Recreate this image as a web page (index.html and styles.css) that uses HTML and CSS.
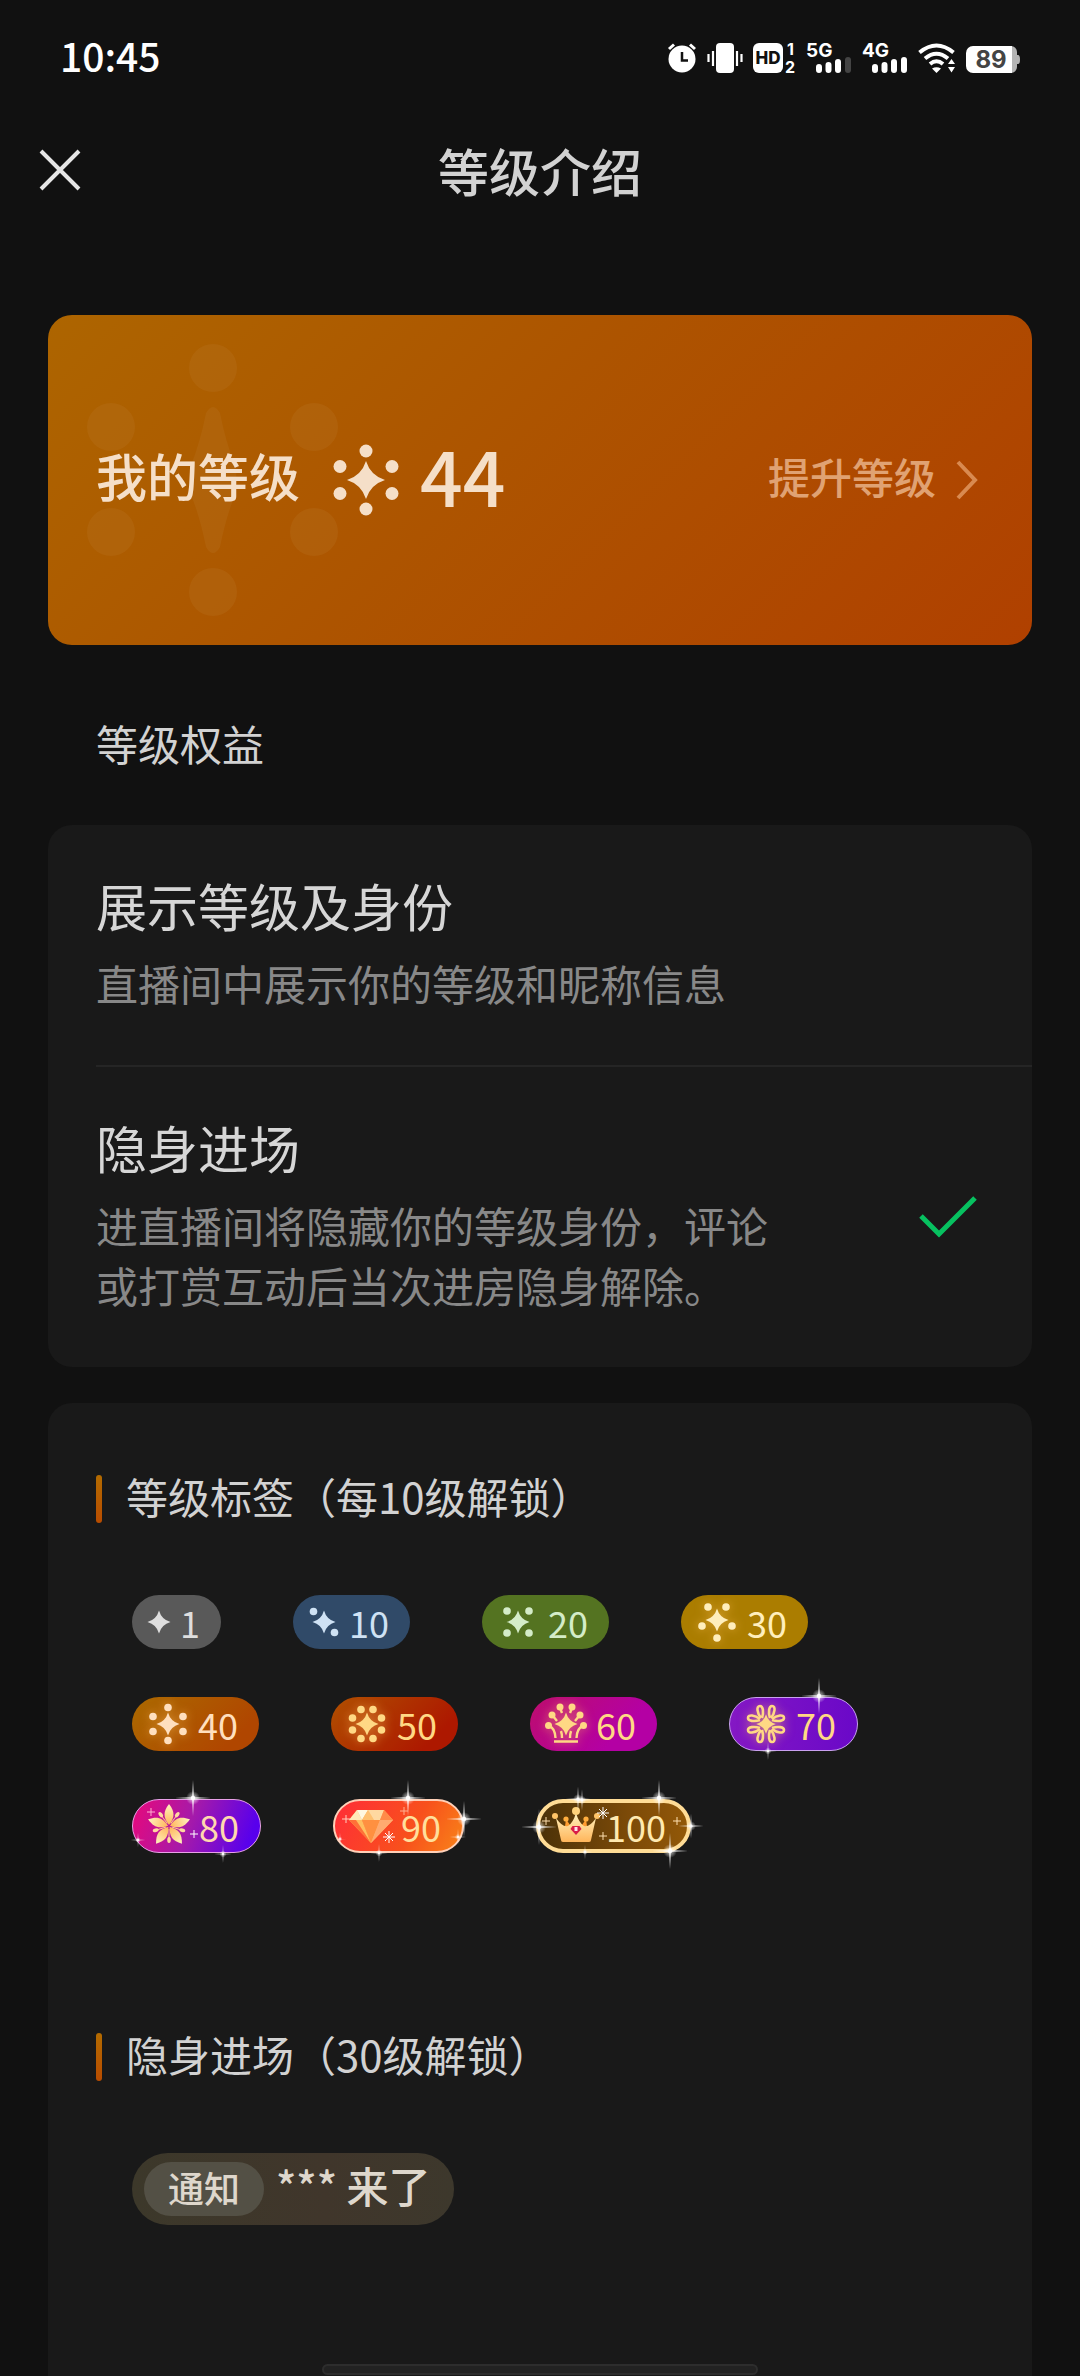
FILE: index.html
```html
<!DOCTYPE html>
<html lang="zh-CN">
<head>
    <meta charset="UTF-8">
    <meta name="viewport" content="width=device-width, initial-scale=1.0">
    <title>等级介绍</title>
    <link rel="stylesheet" href="styles.css">
</head>
<body>
    <!-- shared shapes -->
    <svg class="defs" width="0" height="0" aria-hidden="true">
        <defs>
            <path id="star" d="M0-11.5Q2.5-2.5 11.5 0Q2.5 2.5 0 11.5Q-2.5 2.5-11.5 0Q-2.5-2.5 0-11.5Z"/>
            <radialGradient id="halo">
                <stop offset="0" stop-color="#fff" stop-opacity="0.8"/>
                <stop offset="1" stop-color="#fff" stop-opacity="0"/>
            </radialGradient>
            <g id="glint">
                <circle r="7" fill="url(#halo)"/>
                <path fill="#fff" fill-opacity="0.8" d="M0-18L1 0L0 18L-1 0ZM-18 0L0-1L18 0L0 1Z"/>
                <circle r="2.2" fill="#fff"/>
            </g>
            <path id="cross" d="M-4 0H4M0-4V4" stroke-width="1" fill="none"/>
            <path id="burst" d="M-6 0H6M0-6V6M-4-4L4 4M-4 4L4-4" stroke="#fff" stroke-width="1" fill="none"/>
            <linearGradient id="gold" x1="0" y1="0" x2="0" y2="1">
                <stop offset="0" stop-color="#fff3c0"/>
                <stop offset="1" stop-color="#ffb55a"/>
            </linearGradient>
            <path id="petal" fill="url(#gold)" d="M0-1C-6-9-6-14 0-22C6-14 6-9 0-1Z"/>
            <g id="bud">
                <path d="M0-3V-14" stroke="#ffc890" stroke-width="1"/>
                <ellipse cy="-14" rx="1.8" ry="3" fill="#ffd9a0"/>
            </g>
            <g id="wing" fill="none" stroke="#ffd884" stroke-width="2.6">
                <path d="M4-6C2-12 3-18 6-18C10-18 9-11 5-6"/>
                <path d="M6-4C12-2 18-3 18-6C18-10 11-9 6-5"/>
            </g>
        </defs>
    </svg>

    <div class="status-bar">
        <span class="time">10:45</span>
        <div class="status-icons">
            <svg width="30" height="36" viewBox="0 0 30 36" aria-label="闹钟">
                <circle cx="15" cy="22" r="13.5" fill="#fff"/>
                <path d="M2 12L7 7.500M28 12L23 7.500" stroke="#fff" stroke-width="3"/>
                <path d="M15 15V23.500H21" fill="none" stroke="#111" stroke-width="2.5"/>
            </svg>
            <svg width="36" height="36" viewBox="0 0 36 36" aria-label="振动">
                <rect x="9" y="6" width="18" height="30" rx="4" fill="#fff"/>
                <path d="M1.500 17V25M6 14V29M30 14V29M34.500 17V25" stroke="#fff" stroke-width="2.2"/>
            </svg>
            <svg width="43" height="36" viewBox="0 0 43 36" aria-label="HD">
                <rect y="6" width="30" height="30" rx="6" fill="#fff"/>
                <text class="hd" x="15" y="27">HD</text>
                <text class="sim" x="34" y="18">1</text>
                <text class="sim" x="32" y="36">2</text>
            </svg>
            <svg width="46" height="36" viewBox="0 0 46 36" aria-label="5G 信号">
                <text class="net" x="0" y="20">5G</text>
                <path d="M13 30V33M22.500 28V33M32 25V33" stroke="#fff" stroke-width="6" stroke-linecap="round"/>
                <path d="M42 23V33" stroke="#444" stroke-width="6" stroke-linecap="round"/>
            </svg>
            <svg width="46" height="36" viewBox="0 0 46 36" aria-label="4G 信号">
                <text class="net" x="0" y="20">4G</text>
                <path d="M13 30V33M22.500 28V33M32 25V33M42 23V33" stroke="#fff" stroke-width="6" stroke-linecap="round"/>
            </svg>
            <svg width="38" height="36" viewBox="0 0 38 36" aria-label="无线网络">
                <path d="M1.500 15.500Q18.500 1.500 35.500 15.500" fill="none" stroke="#fff" stroke-width="4"/>
                <path d="M7 21.500Q18.500 12 30 21.500" fill="none" stroke="#fff" stroke-width="4"/>
                <path d="M12 27Q18.500 21.500 25 27" fill="none" stroke="#fff" stroke-width="4"/>
                <path d="M14 31.500Q18.500 29 23 31.500L18.500 36Z" fill="#fff"/>
                <path d="M30 27L33.500 22L37 27ZM30 30L33.500 35.500L37 30Z" fill="#fff"/>
            </svg>
            <svg width="54" height="36" viewBox="0 0 54 36" aria-label="电量">
                <path d="M45 9A6 6 0 0 1 51 15V18H52Q54 18 54 22.500Q54 27 52 27H51V30A6 6 0 0 1 45 36Z" fill="#b4b4b4"/>
                <path d="M7 9H46V36H7A7 7 0 0 1 0 29V16A7 7 0 0 1 7 9Z" fill="#fff"/>
                <text class="battery" x="25" y="31">89</text>
            </svg>
        </div>
    </div>

    <header>
        <button class="close" aria-label="关闭">
            <svg width="44" height="44" viewBox="0 0 44 44">
                <path d="M3 3L41 41M41 3L3 41" stroke="#e6e6e6" stroke-width="4"/>
            </svg>
        </button>
        <h1>等级介绍</h1>
    </header>

    <main>
        <section class="level-card">
            <svg class="watermark" width="256" height="330" viewBox="0 0 256 330" aria-hidden="true">
                <circle cx="165" cy="53" r="24"/>
                <circle cx="63" cy="112" r="24"/>
                <circle cx="266" cy="112" r="24"/>
                <circle cx="63" cy="217" r="24"/>
                <circle cx="266" cy="217" r="24"/>
                <circle cx="165" cy="277" r="24"/>
                <path d="M158 98Q165 86 172 98Q178 128 187 150Q190 165 187 180Q178 202 172 232Q165 244 158 232Q152 202 143 180Q140 165 143 150Q152 128 158 98Z"/>
            </svg>
            <h2>我的等级</h2>
            <svg class="level-icon" width="68" height="82" viewBox="-34 -46 68 82" fill="#f5dfc8" aria-hidden="true">
                <path d="M0-19Q4.500-4.500 19 0Q4.500 4.500 0 19Q-4.500 4.500-19 0Q-4.500-4.500 0-19Z"/>
                <circle cy="-29" r="6.500"/>
                <circle cy="29" r="6.500"/>
                <circle cx="-26" cy="-13.500" r="6.500"/>
                <circle cx="26" cy="-13.500" r="6.500"/>
                <circle cx="-26" cy="13.500" r="6.500"/>
                <circle cx="26" cy="13.500" r="6.500"/>
            </svg>
            <span class="level-number">44</span>
            <a class="upgrade" href="#">
                提升等级
                <svg width="24" height="50" viewBox="0 0 24 50" aria-hidden="true">
                    <path d="M2 12L19 30L2 48" fill="none" stroke="#d98a50" stroke-width="4"/>
                </svg>
            </a>
        </section>

        <h3 class="section-title">等级权益</h3>

        <section class="panel">
            <div class="benefit">
                <div class="benefit-text">
                    <h4>展示等级及身份</h4>
                    <p>直播间中展示你的等级和昵称信息</p>
                </div>
            </div>
            <label class="benefit">
                <span class="benefit-text">
                    <strong>隐身进场</strong>
                    <span>进直播间将隐藏你的等级身份，评论或打赏互动后当次进房隐身解除。</span>
                </span>
                <input type="checkbox" checked>
                <svg class="check" width="58" height="42" viewBox="0 0 58 42" aria-hidden="true">
                    <path d="M2 21L20 39L56 3" fill="none" stroke="#07c160" stroke-width="5"/>
                </svg>
            </label>
        </section>

        <section class="panel unlocks">
            <h3>等级标签（每10级解锁）</h3>
            <div class="badges">
                <div class="badge-row">
                    <span class="badge lv1">
                        <svg width="26" height="44" viewBox="-13 -22 26 44"><use href="#star"/></svg>1
                    </span>
                    <span class="badge lv10">
                        <svg width="34" height="44" viewBox="-17 -22 34 44">
                            <use href="#star"/>
                            <circle cx="-10.500" cy="-10.500" r="3.800"/>
                            <circle cx="10.500" cy="10.500" r="3.800"/>
                        </svg>10
                    </span>
                    <span class="badge lv20">
                        <svg width="44" height="44" viewBox="-22 -22 44 44">
                            <use href="#star"/>
                            <circle cx="-11" cy="-11" r="3.800"/>
                            <circle cx="11" cy="-11" r="3.800"/>
                            <circle cx="-11" cy="11" r="3.800"/>
                            <circle cx="11" cy="11" r="3.800"/>
                        </svg>20
                    </span>
                    <span class="badge lv30">
                        <svg width="44" height="44" viewBox="-22 -22 44 44">
                            <use href="#star" y="-2"/>
                            <circle cx="-9" cy="-15" r="3.800"/>
                            <circle cx="9" cy="-15" r="3.800"/>
                            <circle cx="-15" cy="4" r="3.800"/>
                            <circle cx="15" cy="4" r="3.800"/>
                            <circle cy="16" r="3.800"/>
                        </svg>30
                    </span>
                </div>
                <div class="badge-row">
                    <span class="badge lv40">
                        <svg width="44" height="44" viewBox="-22 -22 44 44">
                            <use href="#star"/>
                            <circle cy="-16.500" r="3.800"/>
                            <circle cy="16.500" r="3.800"/>
                            <circle cx="-15" cy="-7.500" r="3.800"/>
                            <circle cx="15" cy="-7.500" r="3.800"/>
                            <circle cx="-15" cy="7.500" r="3.800"/>
                            <circle cx="15" cy="7.500" r="3.800"/>
                        </svg>40
                    </span>
                    <span class="badge lv50">
                        <svg width="44" height="44" viewBox="-22 -22 44 44">
                            <use href="#star"/>
                            <circle cx="-6" cy="-14.500" r="3.800"/>
                            <circle cx="6" cy="-14.500" r="3.800"/>
                            <circle cx="14.500" cy="-6" r="3.800"/>
                            <circle cx="14.500" cy="6" r="3.800"/>
                            <circle cx="6" cy="14.500" r="3.800"/>
                            <circle cx="-6" cy="14.500" r="3.800"/>
                            <circle cx="-14.500" cy="6" r="3.800"/>
                            <circle cx="-14.500" cy="-6" r="3.800"/>
                        </svg>50
                    </span>
                    <span class="badge lv60">
                        <svg width="44" height="44" viewBox="-22 -22 44 44">
                            <use href="#star"/>
                            <circle cx="-6" cy="-17" r="3.500"/>
                            <circle cx="6" cy="-17" r="3.500"/>
                            <circle cx="-14" cy="-9" r="3.500"/>
                            <circle cx="14" cy="-9" r="3.500"/>
                            <circle cx="-17.500" cy="1.500" r="3.500"/>
                            <circle cx="17.500" cy="1.500" r="3.500"/>
                            <path d="M-12 17.500H12M-17 2Q-11 4-10.500 14M17 2Q11 4 10.500 14M-5 7Q-4 10-4 14M5 7Q4 10 4 14M-13-8L-9-3M13-8L9-3M-6-16L-4-11M6-16L4-11" fill="none" stroke="#ffd884" stroke-width="2.400"/>
                        </svg>60
                    </span>
                    <span class="badge lv70">
                        <svg width="44" height="44" viewBox="-22 -22 44 44">
                            <use href="#star" transform="scale(0.85)"/>
                            <use href="#wing"/>
                            <use href="#wing" transform="rotate(90)"/>
                            <use href="#wing" transform="rotate(180)"/>
                            <use href="#wing" transform="rotate(270)"/>
                        </svg>70
                        <svg class="sparkles" width="129" height="54" viewBox="0 0 129 54" aria-hidden="true">
                            <use href="#glint" transform="translate(90 -1)"/>
                            <use href="#glint" transform="translate(39 54) scale(0.5)"/>
                        </svg>
                    </span>
                </div>
                <div class="badge-row">
                    <span class="badge lv80">
                        <svg width="44" height="44" viewBox="-22 -22 44 44">
                            <use href="#bud" transform="rotate(36)"/>
                            <use href="#bud" transform="rotate(108)"/>
                            <use href="#bud" transform="rotate(180)"/>
                            <use href="#bud" transform="rotate(252)"/>
                            <use href="#bud" transform="rotate(324)"/>
                            <use href="#petal"/>
                            <use href="#petal" transform="rotate(72)"/>
                            <use href="#petal" transform="rotate(144)"/>
                            <use href="#petal" transform="rotate(216)"/>
                            <use href="#petal" transform="rotate(288)"/>
                        </svg>80
                        <svg class="sparkles" width="129" height="54" viewBox="0 0 129 54" aria-hidden="true">
                            <use href="#glint" transform="translate(61 -1)"/>
                            <use href="#glint" transform="translate(91 55) scale(0.5)"/>
                            <use href="#glint" transform="translate(6 41) scale(0.4)"/>
                            <use href="#cross" x="19" y="13" stroke="#ffb0d0"/>
                            <use href="#cross" x="62" y="35" stroke="#fff"/>
                        </svg>
                    </span>
                    <span class="badge lv90">
                        <svg width="44" height="44" viewBox="-22 -22 44 44">
                            <path fill="#ffb45a" d="M-14-16H13L22-6L0 17L-22-6Z"/>
                            <path fill="#ffe9b8" d="M-14-16L-22-6H-9Z"/>
                            <path fill="#fff8e0" d="M-14-16H-3L-9-6Z"/>
                            <path fill="#ffc070" d="M-3-16L-9-6H3Z"/>
                            <path fill="#ffd8a0" d="M-3-16H13L9-6H3Z"/>
                            <path fill="#ff8a48" d="M13-16L22-6H9Z"/>
                            <path fill="#ff7038" d="M-22-6H-9L0 17Z"/>
                            <path fill="#ffc060" d="M-15-6H-9L0 17Z"/>
                            <path fill="#ff9040" d="M-9-6H9L0 17Z"/>
                            <path fill="#ffaa70" d="M9-6H22L0 17Z"/>
                        </svg>90
                        <svg class="sparkles" width="131" height="54" viewBox="0 0 131 54" aria-hidden="true">
                            <use href="#glint" transform="translate(75 -1)"/>
                            <use href="#glint" transform="translate(131 20)"/>
                            <use href="#glint" transform="translate(46 54) scale(0.5)"/>
                            <use href="#glint" transform="translate(7 40) scale(0.35)"/>
                            <use href="#glint" transform="translate(125 38) scale(0.45)"/>
                            <use href="#burst" x="56" y="38"/>
                            <use href="#cross" x="13" y="20" stroke="#ffd0c0"/>
                            <use href="#cross" x="71" y="12" stroke="#ffb090"/>
                        </svg>
                    </span>
                    <span class="badge lv100">
                        <svg width="44" height="44" viewBox="-22 -22 44 44">
                            <path fill="#c41c30" d="M-17 0L-14 9H14L17 0Z"/>
                            <path fill="#ff9c30" d="M-10-7L-4 2H4L10-7L12 8H-12Z"/>
                            <circle cx="-10" cy="-7" r="2.600" fill="#ffae40"/>
                            <circle cx="10" cy="-7" r="2.600" fill="#ffae40"/>
                            <path fill="url(#gold)" d="M-20-8Q-13 2-8 0Q-3-3 0-13Q3-3 8 0Q13 2 20-8L15 14Q15 16 13 16H-13Q-15 16-15 14Z"/>
                            <circle cy="-15" r="4" fill="#ffd27a"/>
                            <circle cx="-21" cy="-10" r="3" fill="#ffc468"/>
                            <circle cx="21" cy="-10" r="3" fill="#ffc468"/>
                            <path fill="#d81c48" d="M-3.500 0H3.500L5.500 3L0 9L-5.500 3Z"/>
                            <path fill="#ffe0e8" d="M-1.500 1H1.500V5H-1.500Z"/>
                        </svg>100
                        <svg class="sparkles" width="155" height="54" viewBox="0 0 155 54" aria-hidden="true">
                            <use href="#glint" transform="translate(42 0) scale(0.7)"/>
                            <use href="#glint" transform="translate(46 1) scale(0.6)"/>
                            <use href="#glint" transform="translate(123 -1)"/>
                            <use href="#glint" transform="translate(3 28)"/>
                            <use href="#glint" transform="translate(155 27) scale(0.7)"/>
                            <use href="#glint" transform="translate(134 52)"/>
                            <use href="#glint" transform="translate(49 53) scale(0.4)"/>
                            <use href="#burst" x="67" y="14"/>
                            <use href="#cross" x="67" y="37" stroke="#ffe0b0"/>
                            <use href="#cross" x="10" y="22" stroke="#ffe0b0"/>
                            <use href="#cross" x="141" y="22" stroke="#ffe0b0"/>
                        </svg>
                    </span>
                </div>
            </div>

            <h3>隐身进场（30级解锁）</h3>
            <div class="notice">
                <span class="notice-tag">通知</span>
                <span class="notice-text">*** 来了</span>
            </div>
        </section>
    </main>
    <div class="home-indicator"></div>
</body>
</html>
```
FILE: styles.css
```css
* {
    box-sizing: border-box;
}
body {
    font-family: "Noto Sans CJK SC", sans-serif;
    font-size: 42px;
    margin: 0;
    min-height: 100vh;
    display: flex;
    flex-direction: column;
    background-color: #111111;
    color: #d2d2d2;
}
h1, h2, h3, h4, p {
    margin: 0;
    font-weight: 400;
}
svg {
    display: block;
    flex-shrink: 0;
    overflow: visible;
}
.defs {
    position: absolute;
}

/* Status bar */
.status-bar {
    height: 110px;
    padding: 0 60px;
    display: flex;
    justify-content: space-between;
    align-items: center;
    color: white;
}
.time {
    font-size: 39px;
    font-weight: 500;
}
.status-icons {
    display: flex;
    gap: 10px;
}
.status-icons text {
    font-family: "Inter", sans-serif;
    font-weight: 700;
    fill: white;
}
.status-icons .hd {
    font-size: 17px;
    font-weight: 800;
    text-anchor: middle;
    fill: #111111;
}
.status-icons .sim {
    font-size: 16px;
}
.status-icons .net {
    font-size: 19px;
}
.status-icons .battery {
    font-size: 24px;
    text-anchor: middle;
    fill: #444444;
}

/* Title bar */
header {
    position: relative;
    height: 120px;
    display: flex;
    justify-content: center;
    align-items: center;
}
header h1 {
    font-size: 51px;
    font-weight: 500;
}
.close {
    position: absolute;
    left: 38px;
    background: none;
    border: none;
    padding: 0;
    cursor: pointer;
}

main {
    flex: 1;
    display: flex;
    flex-direction: column;
    padding: 85px 48px 0;
}

/* My level */
.level-card {
    position: relative;
    min-height: 330px;
    padding: 0 52px 10px 48px;
    display: flex;
    align-items: center;
    border-radius: 24px;
    background: linear-gradient(135deg, #ad6500, #ad5400 45%, #b04000);
    color: #f5dfc8;
}
.watermark {
    position: absolute;
    left: 0;
    top: 0;
    fill: rgba(190, 120, 40, 0.24);
}
.level-card h2 {
    position: relative;
    font-size: 51px;
    font-weight: 500;
}
.level-icon {
    position: relative;
    margin: 0 20px 0 32px;
}
.level-number {
    font-size: 75px;
    font-weight: 500;
    line-height: 80px;
}
.upgrade {
    margin-left: auto;
    display: flex;
    align-items: center;
    gap: 20px;
    font-weight: 500;
    color: #e0a273;
    text-decoration: none;
}

.section-title {
    margin: 68px 48px 52px;
    font-size: 42px;
    line-height: 60px;
}

.panel {
    border-radius: 24px;
    background-color: #191919;
}

/* Benefits */
.benefit {
    margin-left: 48px;
    padding: 50px 55px 52px 0;
    display: flex;
    align-items: center;
    justify-content: space-between;
}
.benefit + .benefit {
    border-top: 2px solid #252525;
}
.benefit-text {
    max-width: 680px;
}
.benefit h4, .benefit strong {
    display: block;
    margin-bottom: 18px;
    font-size: 51px;
    font-weight: 400;
    line-height: 60px;
    color: #d6d6d6;
}
.benefit p, .benefit-text span {
    display: block;
    line-height: 60px;
    color: #888888;
}
.benefit input {
    position: absolute;
    opacity: 0;
}
.check {
    visibility: hidden;
}
.benefit input:checked + .check {
    visibility: visible;
}

/* Level badges */
.unlocks {
    flex: 1;
    margin-top: 36px;
    padding: 72px 48px;
    border-radius: 24px 24px 0 0;
}
.unlocks h3 {
    display: flex;
    gap: 24px;
    font-size: 42px;
    line-height: 42px;
}
.unlocks h3::before {
    content: "";
    width: 6px;
    height: 48px;
    border-radius: 3px;
    background: linear-gradient(#b36b00, #b84c00);
}
.badges {
    display: grid;
    gap: 48px;
    margin: 72px 36px 180px;
}
.badge-row {
    display: flex;
    gap: 72px;
}
.badge {
    position: relative;
    height: 54px;
    padding: 0 21px 0 14px;
    display: flex;
    align-items: center;
    gap: 8px;
    border-radius: 27px;
    font-size: 36px;
    line-height: 50px;
    fill: currentColor;
}
.badge .sparkles {
    position: absolute;
    left: 0;
    top: 0;
}
.lv1 {
    background-color: #595959;
    color: #dedede;
}
.lv10 {
    background-color: #304a68;
    color: #cfe2f4;
}
.lv20 {
    background-color: #547321;
    color: #d4ecc8;
}
.lv30 {
    background-color: #ab7d00;
    color: #ffeebc;
}
.lv40 {
    background: linear-gradient(135deg, #ab6a00, #b04600 80%);
    color: #ffdfbe;
}
.lv50 {
    background: linear-gradient(135deg, #b05000, #ad1800 80%);
    color: #ffd884;
}
.lv60 {
    background: linear-gradient(135deg, #bd0e6c, #b400a4 70%);
    color: #ffd884;
}
.lv70 {
    background: linear-gradient(90deg, #8418c4, #6a08c8);
    border: 1px solid #c9a0f0;
    color: #ffd884;
}
.lv80 {
    background: linear-gradient(110deg, #e8087a, #a51aaa 45%, #5800ec 90%);
    border: 1px solid #e8a0e8;
    color: #ffd8ae;
}
.lv90 {
    background: linear-gradient(120deg, #ff2d38, #f8501c 60%, #f88418);
    border: 2px solid #ffd0b8;
    color: #ffdf9c;
}
.lv100 {
    background: linear-gradient(90deg, #4c3208, #7c4a08 60%, #925808);
    border: 4px solid #ffdc96;
    color: #ffe9b0;
}
/* sparkles start from the outer edge of the border */
.lv70 .sparkles, .lv80 .sparkles {
    margin: -1px;
}
.lv90 .sparkles {
    margin: -2px;
}
.lv100 .sparkles {
    margin: -4px;
}
.lv30 svg, .lv40 svg, .lv50 svg, .lv60 svg, .lv70 svg:first-child {
    filter: drop-shadow(0 0 5px rgba(255, 190, 90, 0.6));
}

/* Entry notice */
.notice {
    width: fit-content;
    height: 72px;
    margin: 72px 36px 0;
    padding: 9px 24px 9px 12px;
    display: flex;
    gap: 12px;
    border-radius: 36px;
    background: linear-gradient(90deg, #3c382a, #40362b 60%, #3d382c);
    color: #ded7cc;
    font-weight: 500;
}
.notice-tag {
    height: 54px;
    padding: 0 24px;
    border-radius: 27px;
    background-color: #535045;
    font-size: 36px;
    line-height: 50px;
}
.notice-text {
    line-height: 46px;
}

.home-indicator {
    position: fixed;
    left: 50%;
    bottom: 1px;
    width: 436px;
    height: 11px;
    margin-left: -218px;
    border: 2px solid #2d2d2d;
    border-radius: 6px;
    background-color: #222222;
}
```
